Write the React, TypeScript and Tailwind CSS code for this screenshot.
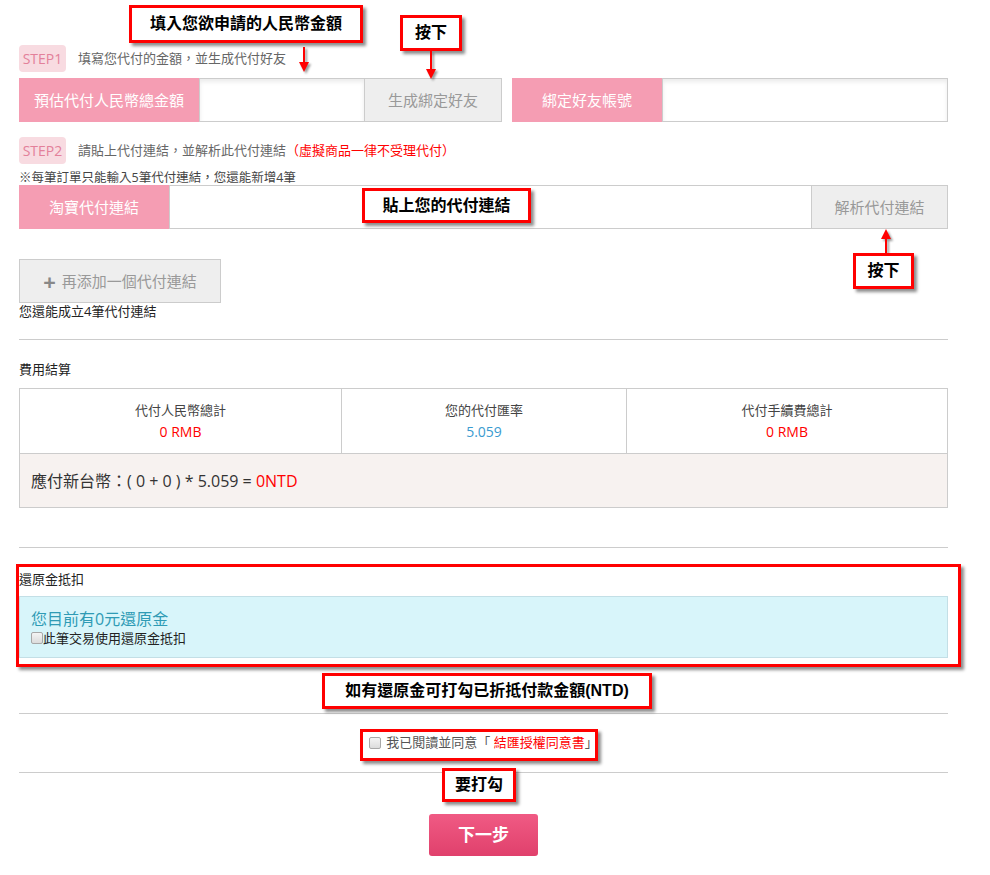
import React from "react";

function Note({ className, children }: { className: string; children: React.ReactNode }) {
  return (
    <div
      className={`absolute flex items-center justify-center bg-white border-[3px] border-[#f00] shadow-[3px_3px_3px_rgba(0,0,0,0.45)] text-black font-bold text-[16px] leading-none font-['Liberation_Sans','Noto_Sans_CJK_TC',sans-serif] ${className}`}
    >
      {children}
    </div>
  );
}

function Arrow({ x, y1, y2 }: { x: number; y1: number; y2: number }) {
  const down = y2 > y1;
  const top = Math.min(y1, y2);
  const h = Math.abs(y2 - y1);
  return (
    <svg
      className="absolute drop-shadow-[2px_2px_1px_rgba(0,0,0,0.4)]"
      style={{ left: x - 6, top }}
      width={12}
      height={h}
      viewBox={`0 0 12 ${h}`}
    >
      {down ? (
        <>
          <line x1={6} y1={0} x2={6} y2={h - 8} stroke="#f00" strokeWidth={2} />
          <polygon points={`1,${h - 10} 11,${h - 10} 6,${h}`} fill="#f00" />
        </>
      ) : (
        <>
          <line x1={6} y1={8} x2={6} y2={h} stroke="#f00" strokeWidth={2} />
          <polygon points={`1,10 11,10 6,0`} fill="#f00" />
        </>
      )}
    </svg>
  );
}

function Step({ n }: { n: number }) {
  return (
    <span className="inline-flex items-center justify-center h-[27px] w-[47px] rounded-[4px] bg-[#f8dbe1] text-[#e3809a] text-[14px]">
      STEP{n}
    </span>
  );
}

function Checkbox() {
  return (
    <span className="inline-block w-[12px] h-[12px] rounded-[2px] border border-[#a8a8a8] bg-gradient-to-b from-[#f4f4f4] to-[#dcdcdc] shrink-0" />
  );
}

export default function App() {
  return (
    <div className="relative w-[990px] h-[875px] bg-white text-[#333] font-['Open_Sans','Noto_Sans_CJK_TC',sans-serif]">
      <div className="ml-[19px] w-[929px] pt-[45px] flex flex-col">
        {/* STEP1 */}
        <div className="flex items-center gap-[12px]">
          <Step n={1} />
          <span className="text-[13px] text-[#666] leading-none">填寫您代付的金額，並生成代付好友</span>
        </div>
        <div className="mt-[6px] flex h-[44px] text-[15px]">
          <div className="w-[180px] bg-[#f59db3] text-white flex items-center justify-center">預估代付人民幣總金額</div>
          <div className="w-[166px] border border-[#ccc] bg-white shadow-[inset_0_3px_4px_rgba(0,0,0,0.08)]" />
          <div className="w-[137px] border border-[#ccc] border-l-0 bg-[#eee] text-[#999] flex items-center justify-center">生成綁定好友</div>
          <div className="ml-[10px] w-[150px] bg-[#f59db3] text-white flex items-center justify-center">綁定好友帳號</div>
          <div className="flex-1 border border-[#ccc] bg-white shadow-[inset_0_3px_4px_rgba(0,0,0,0.08)]" />
        </div>

        {/* STEP2 */}
        <div className="mt-[15px] flex items-center gap-[12px]">
          <Step n={2} />
          <span className="text-[13px] text-[#666] leading-none">
            請貼上代付連結，並解析此代付連結
            <span className="text-[#f00]">（虛擬商品一律不受理代付）</span>
          </span>
        </div>
        <div className="mt-[6px] text-[12.5px] leading-[15px] text-[#444]">※每筆訂單只能輸入5筆代付連結，您還能新增4筆</div>
        <div className="flex h-[44px] text-[15px]">
          <div className="w-[150px] bg-[#f59db3] text-white flex items-center justify-center">淘寶代付連結</div>
          <div className="w-[643px] border border-[#ccc] bg-white" />
          <div className="flex-1 border border-[#ccc] border-l-0 bg-[#eee] text-[#999] flex items-center justify-center">解析代付連結</div>
        </div>

        <div className="mt-[30px] w-[202px] h-[44px] border border-[#ccc] bg-[#eee] text-[#999] text-[15px] flex items-center justify-center gap-[6px]">
          <span className="text-[22px] font-bold leading-none text-[#888]">+</span>
          <span>再添加一個代付連結</span>
        </div>
        <div className="mt-[1px] text-[13px] leading-[15px] text-[#222]">您還能成立4筆代付連結</div>

        <div className="mt-[20px] border-t border-[#ccc]" />
        <div className="mt-[22px] text-[13px] leading-[15px] text-[#222]">費用結算</div>

        {/* table */}
        <div className="mt-[11px] border border-[#ccc]">
          <div className="grid grid-cols-[321px_285px_1fr] h-[65px] border-b border-[#ccc]">
            <div className="flex flex-col items-center justify-center gap-[4px]">
              <span className="text-[13px] leading-[17px] text-[#444]">代付人民幣總計</span>
              <span className="text-[14px] leading-[18px] text-[#f00]">0 RMB</span>
            </div>
            <div className="flex flex-col items-center justify-center gap-[4px] border-l border-[#ccc]">
              <span className="text-[13px] leading-[17px] text-[#444]">您的代付匯率</span>
              <span className="text-[14px] leading-[18px] text-[#3a9bd0]">5.059</span>
            </div>
            <div className="flex flex-col items-center justify-center gap-[4px] border-l border-[#ccc]">
              <span className="text-[13px] leading-[17px] text-[#444]">代付手續費總計</span>
              <span className="text-[14px] leading-[18px] text-[#f00]">0 RMB</span>
            </div>
          </div>
          <div className="h-[53px] bg-[#f7f2f0] flex items-center px-[11px] text-[16px] text-[#333]">
            <span>
              應付新台幣：( 0 + 0 ) * 5.059 = <span className="text-[#f00]">0NTD</span>
            </span>
          </div>
        </div>

        <div className="mt-[39px] border-t border-[#ccc]" />
        <div className="mt-[24px] text-[13px] leading-[15px] text-[#222]">還原金抵扣</div>
        <div className="mt-[9px] h-[62px] bg-[#d8f5fa] border border-[#c3dfe6] px-[11px] flex flex-col justify-center gap-[2px]">
          <div className="text-[16px] leading-[20px] text-[#2f9bb5]">您目前有0元還原金</div>
          <div className="flex items-center text-[13px] leading-[15px] text-[#222]">
            <Checkbox />
            <span>此筆交易使用還原金抵扣</span>
          </div>
        </div>

        <div className="mt-[55px] border-t border-[#ccc]" />
        <div className="h-[58px] flex items-center justify-center gap-[5px] text-[13px] text-[#555]">
          <Checkbox />
          <span>
            我已閱讀並同意「 <span className="text-[#f00]">結匯授權同意書</span>」
          </span>
        </div>
        <div className="border-t border-[#ccc]" />
        <div className="mt-[41px] flex justify-center">
          <button className="w-[109px] h-[42px] rounded-[3px] bg-gradient-to-b from-[#f05a84] to-[#e0406c] text-white text-[17px] font-bold">
            下一步
          </button>
        </div>
      </div>

      {/* annotations */}
      <Note className="left-[129px] top-[5px] w-[234px] h-[38px]">填入您欲申請的人民幣金額</Note>
      <Arrow x={304} y1={47} y2={72} />
      <Note className="left-[400px] top-[15px] w-[62px] h-[36px]">按下</Note>
      <Arrow x={431} y1={51} y2={79} />
      <Note className="left-[362px] top-[188px] w-[169px] h-[35px]">貼上您的代付連結</Note>
      <Arrow x={886} y1={253} y2={229} />
      <Note className="left-[853px] top-[253px] w-[61px] h-[36px]">按下</Note>
      <div className="absolute left-[16px] top-[564px] w-[945px] h-[103px] border-[3px] border-[#f00] shadow-[3px_3px_3px_rgba(0,0,0,0.45)]" />
      <Note className="left-[322px] top-[673px] w-[330px] h-[36px]">如有還原金可打勾已折抵付款金額(NTD)</Note>
      <div className="absolute left-[360px] top-[729px] w-[238px] h-[32px] border-[3px] border-[#f00] shadow-[3px_3px_3px_rgba(0,0,0,0.45)]" />
      <Note className="left-[442px] top-[768px] w-[74px] h-[34px]">要打勾</Note>
    </div>
  );
}
